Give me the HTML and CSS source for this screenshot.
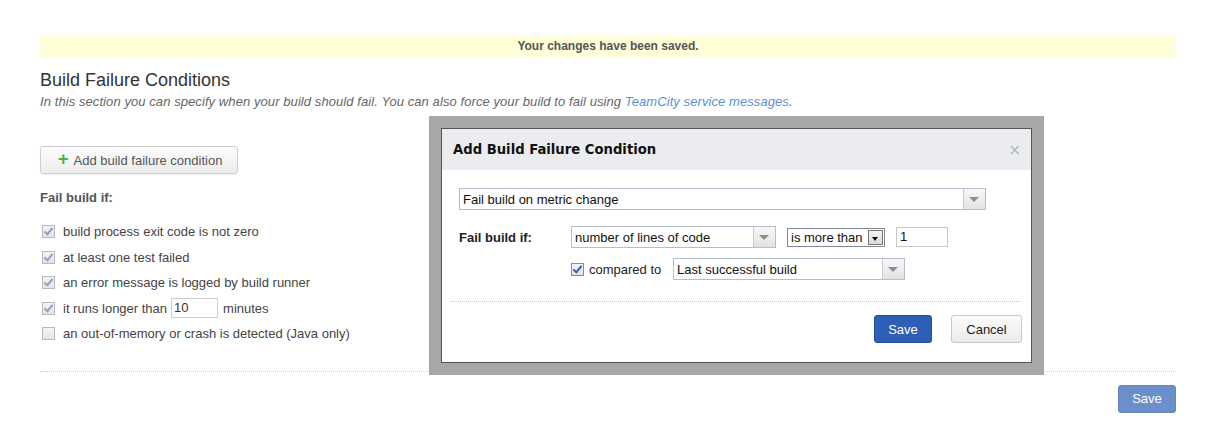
FILE: index.html
```html
<!DOCTYPE html>
<html>
<head>
<meta charset="utf-8">
<link rel="stylesheet" href="styles.css">
</head>
<body>
<div class="page">
  <div class="banner">Your changes have been saved.</div>
  <h1 class="title">Build Failure Conditions</h1>
  <p class="desc">In this section you can specify when your build should fail. You can also force your build to fail using <a class="link" href="#">TeamCity service messages</a>.</p>
  <button class="btn-add"><span class="plus">+</span>Add build failure condition</button>
  <div class="fail-label">Fail build if:</div>
  <ul class="conds">
    <li><span class="cb on"></span>build process exit code is not zero</li>
    <li><span class="cb on"></span>at least one test failed</li>
    <li><span class="cb on"></span>an error message is logged by build runner</li>
    <li><span class="cb on"></span>it runs longer than <span class="num">10</span> minutes</li>
    <li><span class="cb"></span>an out-of-memory or crash is detected (Java only)</li>
  </ul>
  <div class="sep"></div>
  <div class="actions"><button class="btn-save-dim">Save</button></div>
</div>

<div class="frame">
  <div class="dialog">
    <div class="dlg-head">
      <span class="dlg-title">Add Build Failure Condition</span>
      <span class="close">×</span>
    </div>
    <div class="dlg-body">
      <div class="sel sel-type"><span class="sel-text">Fail build on metric change</span><span class="sel-arrow"></span></div>
      <div class="row2">
        <span class="row-label">Fail build if:</span>
        <div class="sel sel-metric"><span class="sel-text">number of lines of code</span><span class="sel-arrow"></span></div>
        <div class="native"><span class="native-text">is more than</span><span class="native-arrow"></span></div>
        <span class="val">1</span>
      </div>
      <div class="row3">
        <span class="cb on blue"></span><span class="cmp">compared to</span>
        <div class="sel sel-base"><span class="sel-text">Last successful build</span><span class="sel-arrow"></span></div>
      </div>
    </div>
    <div class="dlg-sep"></div>
    <div class="dlg-foot">
      <button class="btn-save">Save</button>
      <button class="btn-cancel">Cancel</button>
    </div>
  </div>
</div>
</body>
</html>
```

FILE: styles.css
```css
html, body { margin: 0; padding: 0; background: #fff; }
body { font-family: "Liberation Sans", Arial, sans-serif; color: #444; width: 1206px; height: 430px; overflow: hidden; position: relative; }

.page { padding: 35px 30px 0 40px; width: 1136px; }

.banner { height: 23px; line-height: 23px; background: #fefed9; text-align: center; font-weight: bold; font-size: 12px; color: #555; }

.title { margin: 12px 0 0; font-size: 18px; line-height: 20px; font-weight: normal; color: #333; }

.desc { margin: 4px 0 0; font-size: 13px; line-height: 16px; font-style: italic; color: #666; letter-spacing: 0.08px; }
.link { color: #5b8fd6; text-decoration: none; }

.btn-add { display: flex; align-items: center; margin-top: 36px; width: 198px; height: 28px; padding: 0 0 0 17px; border: 1px solid #cfcfcf; border-radius: 3px; background: linear-gradient(#fdfdfd, #ececec); font-family: "Liberation Sans", Arial, sans-serif; font-size: 13px; color: #555; box-shadow: 0 1px 1px rgba(0,0,0,0.06); }
.plus { color: #4fae4f; font-size: 18px; font-weight: bold; margin-right: 5px; line-height: 1; position: relative; top: -1px; }

.fail-label { margin-top: 16px; font-size: 13px; line-height: 16px; font-weight: bold; color: #555; }

.conds { list-style: none; margin: 13px 0 0; padding: 0; }
.conds li { display: flex; align-items: center; height: 25.5px; font-size: 13px; color: #444; }

.cb { display: inline-block; box-sizing: border-box; width: 13px; height: 13px; border: 1px solid #b9b9b9; background: linear-gradient(#f4f4f4, #e4e4e4); margin: 0 8px 0 2px; position: relative; }
.cb.on::after { content: ""; position: absolute; left: 3px; top: 0px; width: 3px; height: 7px; border: solid #8aa3c8; border-width: 0 2px 2px 0; transform: rotate(40deg); }
.cb.blue { border-color: #8d8d8d; }
.cb.blue::after { border-color: #3a62b0; }

.num { display: inline-block; box-sizing: border-box; width: 47px; height: 20px; line-height: 18px; border: 1px solid #ccc; padding-left: 2px; margin: 0 5px 0 4px; font-size: 13px; color: #333; }

.sep { margin-top: 24px; border-top: 1px dotted #ccc; }
.actions { display: flex; justify-content: flex-end; margin-top: 13px; }
.btn-save-dim { width: 58px; height: 28px; border: 1px solid #6585c0; border-radius: 3px; background: #6b8fca; color: #fff; font-family: "Liberation Sans", Arial, sans-serif; font-size: 13px; padding: 0; }

/* dialog */
.frame { position: absolute; left: 429px; top: 116px; width: 615px; height: 259px; box-sizing: border-box; padding: 12px 12px 12px 12px; background: #a7a7a7; }
.dialog { box-sizing: border-box; width: 591px; height: 235px; border: 1px solid #555; background: #fff; display: flex; flex-direction: column; }
.dlg-head { height: 41px; background: #ebecef; display: flex; align-items: center; justify-content: space-between; padding: 0 10px 0 11px; }
.dlg-title { font-family: "DejaVu Sans", Verdana, sans-serif; font-weight: bold; font-size: 13.2px; color: #111; }
.close { color: #b5b5b5; font-size: 15px; font-family: "DejaVu Sans", sans-serif; }

.dlg-body { padding: 18px 0 0 17px; }
.sel { box-sizing: border-box; display: flex; border: 1px solid #b9bccb; background: #fff; font-size: 13px; color: #111; }
.sel-text { flex: 1; padding: 1px 0 0 3px; white-space: nowrap; overflow: hidden; }
.sel-arrow { width: 21px; border-left: 1px solid #c8cad6; background: linear-gradient(#f8f8f8, #e2e2e2); position: relative; }
.sel-arrow::after { content: ""; position: absolute; left: 5px; top: 50%; margin-top: -2px; border-left: 5px solid transparent; border-right: 5px solid transparent; border-top: 5px solid #8e8e8e; }

.sel-type { width: 527px; height: 22px; line-height: 20px; }

.row2 { display: flex; align-items: center; margin-top: 16px; height: 22px; }
.row-label { width: 112px; font-weight: bold; font-size: 13px; color: #222; }
.sel-metric { width: 205px; height: 22px; line-height: 20px; }
.native { box-sizing: border-box; display: flex; width: 98px; height: 19px; margin-left: 11px; border: 1px solid #828790; font-size: 13px; color: #111; line-height: 17px; }
.native-text { flex: 1; padding-left: 3px; }
.native-arrow { width: 15px; margin: 1px; background: linear-gradient(#f2f2f2, #d9d9d9); border: 1px solid #777; box-sizing: border-box; position: relative; }
.native-arrow::after { content: ""; position: absolute; left: 3px; top: 6px; border-left: 3.5px solid transparent; border-right: 3.5px solid transparent; border-top: 4px solid #111; }
.val { box-sizing: border-box; width: 52px; height: 20px; line-height: 18px; margin-left: 11px; border: 1px solid #c8c8c8; padding-left: 3px; font-size: 13px; color: #111; }

.row3 { display: flex; align-items: center; margin: 10px 0 0 112px; height: 22px; }
.row3 .cb { margin: 0 5px 0 0; }
.cmp { font-size: 13px; color: #222; width: 84px; }
.sel-base { width: 232px; height: 22px; line-height: 20px; }

.dlg-sep { margin: 21px 10px 0 9px; border-top: 1px dotted #c8c8c8; }
.dlg-foot { display: flex; justify-content: flex-end; gap: 19px; padding: 13px 9px 0 0; }
.btn-save { width: 58px; height: 28px; border: 1px solid #1f4f9e; border-radius: 3px; background: #2d5fb6; color: #fff; font-family: "Liberation Sans", Arial, sans-serif; font-size: 13px; padding: 0; }
.btn-cancel { width: 71px; height: 28px; border: 1px solid #c9c9c9; border-radius: 3px; background: linear-gradient(#fbfbfb, #ebebeb); color: #222; font-family: "Liberation Sans", Arial, sans-serif; font-size: 13px; padding: 0; }
```
